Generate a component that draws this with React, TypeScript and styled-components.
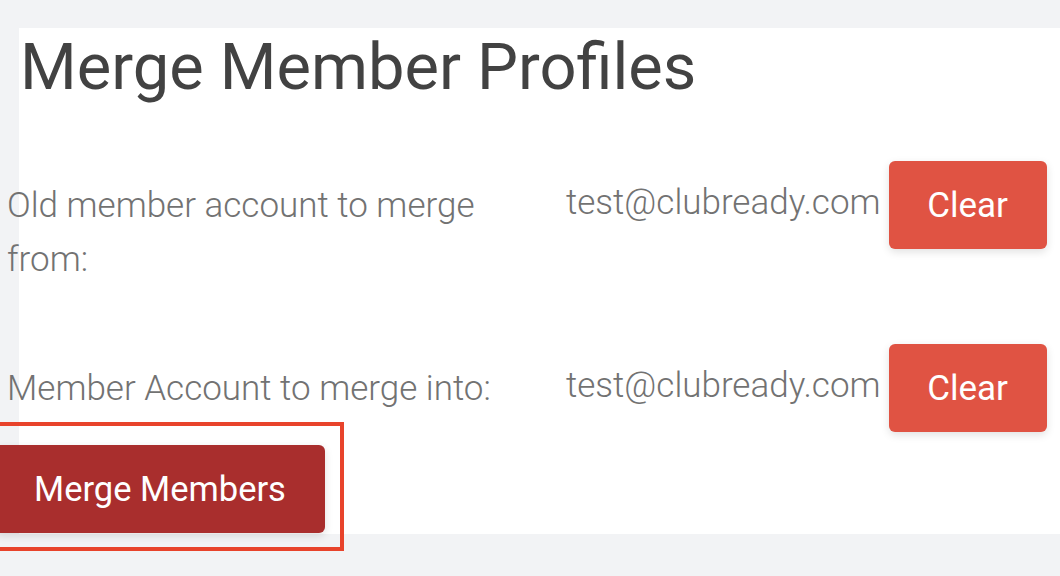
import React from "react";
import styled, { createGlobalStyle } from "styled-components";

const GlobalStyle = createGlobalStyle`
  html, body {
    margin: 0;
    padding: 0;
    background: #f2f3f5;
    font-family: Roboto, "Liberation Sans", Arial, sans-serif;
  }
`;

const Page = styled.div`
  height: 576px;
  overflow: hidden;
  padding: 28px 0 0 19px;
  box-sizing: border-box;
`;

const Card = styled.section`
  display: flow-root;
  background: #ffffff;
  height: 506px;
  box-sizing: border-box;
`;

const Title = styled.h1`
  margin: 6px 0 0 1px;
  font-size: 65px;
  line-height: 66px;
  font-weight: 400;
  color: #424242;
`;

const Form = styled.div`
  margin: 61px 0 0 -12px;
  display: flex;
  flex-direction: column;
`;

const Row = styled.div<{ $gap?: number }>`
  display: flex;
  align-items: flex-start;
  margin-bottom: ${({ $gap }) => $gap ?? 0}px;
`;

const Label = styled.div`
  width: 559px;
  padding-right: 60px;
  box-sizing: border-box;
  flex: none;
  margin-top: 18px;
  font-size: 35px;
  line-height: 54px;
  font-weight: 300;
  color: #727272;
`;

const Value = styled.div`
  margin-top: 15px;
  font-size: 35px;
  line-height: 54px;
  font-weight: 300;
  color: #727272;
  white-space: nowrap;
`;

const Button = styled.button<{ $tone: "clear" | "merge" }>`
  border: none;
  border-radius: 6px;
  color: #ffffff;
  font-family: inherit;
  font-weight: 400;
  cursor: pointer;
  box-shadow: 0 3px 8px rgba(0, 0, 0, 0.12);
  background: ${({ $tone }) => ($tone === "clear" ? "#e05343" : "#a92e2d")};
`;

const ClearButton = styled(Button)`
  margin-left: 8px;
  width: 158px;
  height: 88px;
  font-size: 35px;
  flex: none;
`;

const MergeWrap = styled.div`
  position: relative;
  margin-left: -12px;
  width: 330px;
`;

const MergeButton = styled(Button)`
  display: block;
  width: 330px;
  height: 88px;
  font-size: 34.5px;
`;

const Highlight = styled.div`
  position: absolute;
  left: -30px;
  top: -23px;
  right: -19px;
  bottom: -18px;
  border: 4px solid #e8432b;
  pointer-events: none;
`;

const fields = [
  { label: "Old member account to merge from:", value: "test@clubready.com", gap: 57 },
  { label: "Member Account to merge into:", value: "test@clubready.com", gap: 13 },
];

export default function App() {
  return (
    <Page>
      <GlobalStyle />
      <Card>
        <Title>Merge Member Profiles</Title>
        <Form>
          {fields.map((f) => (
            <Row key={f.label} $gap={f.gap}>
              <Label>{f.label}</Label>
              <Value>{f.value}</Value>
              <ClearButton $tone="clear">Clear</ClearButton>
            </Row>
          ))}
          <MergeWrap>
            <MergeButton $tone="merge">Merge Members</MergeButton>
            <Highlight />
          </MergeWrap>
        </Form>
      </Card>
    </Page>
  );
}
